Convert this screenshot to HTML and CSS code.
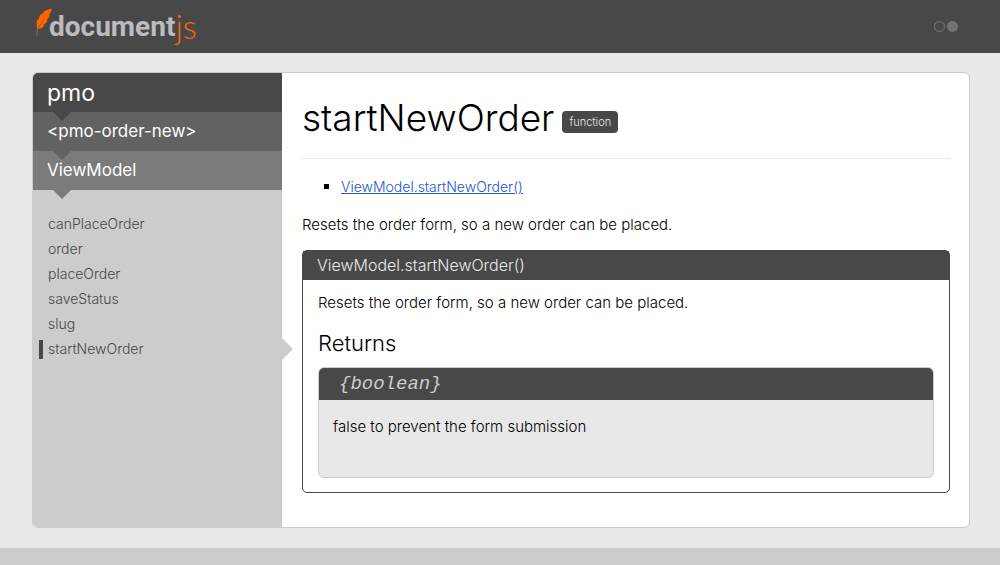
FILE: index.html
```html
<!DOCTYPE html>
<html lang="en">
<head>
<meta charset="utf-8">
<meta name="viewport" content="width=device-width, initial-scale=1">
<title>startNewOrder - DocumentJS</title>
<link rel="stylesheet" href="styles.css">
</head>
<body>
<header class="topbar">
  <a class="logo" href="#">
    <svg class="feather" viewBox="0 0 18 30" aria-hidden="true">
      <path class="quill" d="M16.800 0.500C13 1.300 10.500 2.300 8.200 4.200L7.700 6L6.500 5.800C4.500 7.800 4 9.500 3.800 11.500L2.800 11C1.400 14 1.200 17.500 2 20.500L2.200 23.500C3.500 19.500 6 14.500 10.500 8.500C7.500 13.500 5 17.500 3.600 21C6 20.600 8.300 19.200 9.300 17L8.300 16.800C10.300 16 12 14.300 12.600 12L11.400 12C13.300 10.800 14.500 9 14.700 7L13.700 7C15.300 5.500 16.300 3.500 16.800 0.500Z"/>
      <path class="nib" d="M2.500 20.500L1.700 27.500"/>
    </svg>
    <span class="logo-document">document</span><span class="logo-js">js</span>
  </a>
  <div class="status" aria-hidden="true"><span class="dot"></span><span class="dot dot-on"></span></div>
</header>

<div class="page">
  <div class="panel">
    <nav class="sidebar">
      <div class="crumbs">
        <a class="crumb crumb-root" href="#">pmo</a>
        <a class="crumb crumb-module" href="#">&lt;pmo-order-new&gt;</a>
        <a class="crumb crumb-type" href="#">ViewModel</a>
      </div>
      <ul class="members">
        <li><a href="#">canPlaceOrder</a></li>
        <li><a href="#">order</a></li>
        <li><a href="#">placeOrder</a></li>
        <li><a href="#">saveStatus</a></li>
        <li><a href="#">slug</a></li>
        <li class="active"><a href="#">startNewOrder</a></li>
      </ul>
    </nav>

    <main class="content">
      <div class="title">
        <h1>startNewOrder</h1>
        <span class="badge">function</span>
      </div>
      <ul class="contents">
        <li><a href="#signature">ViewModel.startNewOrder()</a></li>
      </ul>
      <p class="text">Resets the order form, so a new order can be placed.</p>
      <section class="signature" id="signature">
        <h2 class="signature-title">ViewModel.startNewOrder()</h2>
        <div class="signature-body">
          <p class="text">Resets the order form, so a new order can be placed.</p>
          <h3 class="returns">Returns</h3>
          <div class="result">
            <div class="result-type"><code>{boolean}</code></div>
            <p class="text result-text">false to prevent the form submission</p>
          </div>
        </div>
      </section>
    </main>
  </div>
</div>
<footer class="footer"></footer>
</body>
</html>
```

FILE: styles.css
```css
* { box-sizing: border-box; }

body {
  margin: 0;
  min-height: 100vh;
  display: flex;
  flex-direction: column;
  background: #e8e8e8;
  color: #000;
  font-family: Inter, "Liberation Sans", sans-serif;
  font-size: 15px;
  font-weight: 300;
  line-height: 20px;
}

h1, h2, h3, p, ul { margin: 0; padding: 0; font-weight: 300; }

.topbar {
  display: flex;
  align-items: center;
  justify-content: space-between;
  height: 53px;
  padding: 0 42px 0 35px;
  background: #484848;
}

.logo {
  display: flex;
  align-items: flex-start;
  text-decoration: none;
  line-height: 38px;
}
.feather { width: 18px; height: 30px; margin-right: -4px; }
.logo-document { color: #bcbcc0; font-family: Roboto, sans-serif; font-size: 28px; font-weight: 700; }
.logo-js { color: #ff6600; font-family: Lato, sans-serif; font-size: 33px; font-weight: 300; line-height: 36px; }
.quill { fill: #ff6600; }
.nib { fill: none; stroke: #777; stroke-width: 1; }

.status { display: flex; gap: 2px; }
.dot { width: 11px; height: 11px; border: 1px solid #77777a; border-radius: 50%; }
.dot-on { background: #747476; }

.page { padding: 19px 30px 20px 32px; }

.panel {
  display: flex;
  min-height: 456px;
  border: 1px solid #ccc;
  border-radius: 6px;
  background: #fff;
}

.sidebar {
  flex: 0 0 249px;
  background: #ccc;
  border-radius: 5px 0 0 5px;
}

.crumb {
  position: relative;
  display: block;
  height: 39px;
  padding-left: 14px;
  color: #fff;
  font-size: 17px;
  font-weight: 400;
  line-height: 39px;
  text-decoration: none;
}
.crumb::after {
  content: "";
  position: absolute;
  z-index: 1;
  top: 100%;
  left: 20px;
  border: 9px solid transparent;
  border-bottom-width: 0;
}
.crumb-root { background: #484848; border-radius: 5px 0 0 0; font-size: 23px; line-height: 41px; }
.crumb-root::after { border-top-color: #484848; }
.crumb-module { background: #626262; }
.crumb-module::after { border-top-color: #626262; }
.crumb-type { background: #7b7b7b; }
.crumb-type::after { border-top-color: #7b7b7b; }

.members { padding-top: 21px; list-style: none; font-size: 14px; line-height: 25px; }
.members li { position: relative; padding-left: 15px; }
.members a { color: #484848; text-decoration: none; }
.active::before {
  content: "";
  position: absolute;
  top: 4px;
  left: 6px;
  width: 4px;
  height: 19px;
  background: #484848;
}
.active::after {
  content: "";
  position: absolute;
  top: 2px;
  left: 100%;
  border: 11px solid transparent;
  border-left-color: #ccc;
  border-right-width: 0;
}

.content { flex: 1; min-width: 0; padding: 20px 19px 34px 20px; }

.title {
  display: flex;
  align-items: center;
  gap: 8px;
  padding-bottom: 15px;
  border-bottom: 1px solid #e8e8e8;
}
h1 { font-size: 37px; line-height: 50px; }
.badge {
  margin-top: 8px;
  padding: 0 7px;
  border-radius: 4px;
  background: #484848;
  color: #e8e8e8;
  font-size: 11px;
  line-height: 22px;
}

.contents { padding: 18px 0 18px 39px; list-style: square; }
.contents a { color: #2255cc; font-size: 14px; }

.signature { margin-top: 15px; border: 1px solid #484848; border-radius: 5px; }
.signature-title {
  padding-left: 14px;
  background: #484848;
  color: #e8e8e8;
  font-size: 16px;
  line-height: 29px;
}
.signature-body { padding: 13px 15px 14px; }
.returns { padding: 15px 0 9px; font-size: 22px; line-height: 30px; }

.result { min-height: 111px; border: 1px solid #ccc; border-radius: 6px; background: #e8e8e8; }
.result-type {
  padding-left: 20px;
  border-radius: 5px 5px 0 0;
  background: #484848;
  color: #ccc;
  line-height: 32px;
}
.result-type code { font-family: "Liberation Mono", monospace; font-size: 19px; font-style: italic; }
.result-text { padding: 17px 14px; }

.footer { flex: 1; min-height: 17px; background: #ccc; }
```
